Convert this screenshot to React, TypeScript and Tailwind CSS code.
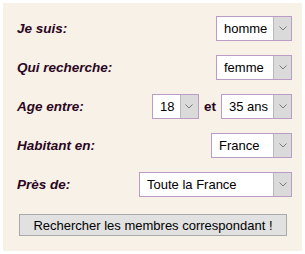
import React from "react";

function Chevron() {
  return (
    <svg width="8" height="5" viewBox="0 0 8 5" className="block">
      <path d="M0.5 0.5 L4 4 L7.5 0.5" fill="none" stroke="#7a7a7a" strokeWidth="1" />
    </svg>
  );
}

function Select({ value, width }: { value: string; width: string }) {
  return (
    <div
      className={`flex h-[25px] items-stretch border border-[#bb9cc7] bg-white ${width}`}
    >
      <span className="flex flex-1 items-center pl-[7px] text-[13px] leading-none text-black">
        {value}
      </span>
      <span className="flex w-[18px] items-center justify-center border-l border-[#b9b9b9] bg-[#dadada]">
        <Chevron />
      </span>
    </div>
  );
}

function Row({ label, children }: { label: string; children: React.ReactNode }) {
  return (
    <div className="flex h-[25px] items-center justify-between">
      <span className="text-[13.5px] font-bold italic leading-none text-[#2a0622]">
        {label}
      </span>
      <div className="flex items-center">{children}</div>
    </div>
  );
}

export default function App() {
  return (
    <div
      className="h-[254px] w-[305px] bg-white p-[3px]"
      style={{ fontFamily: '"Liberation Sans", Arial, sans-serif' }}
    >
      <div className="flex h-[248px] w-[299px] flex-col bg-[#f8f1e7] pl-[14px] pr-[10px] pt-[13px]">
        <div className="flex flex-col gap-[14px]">
          <Row label="Je suis:">
            <Select value="homme" width="w-[76px]" />
          </Row>
          <Row label="Qui recherche:">
            <Select value="femme" width="w-[76px]" />
          </Row>
          <Row label="Age entre:">
            <Select value="18" width="w-[47px]" />
            <span className="mx-[5px] text-[13.5px] font-bold leading-none text-[#2a0622]">
              et
            </span>
            <Select value="35 ans" width="w-[71px]" />
          </Row>
          <Row label="Habitant en:">
            <Select value="France" width="w-[81px]" />
          </Row>
          <Row label="Près de:">
            <Select value="Toute la France" width="w-[153px]" />
          </Row>
        </div>
        <div className="mt-[17px] pl-[2px] pr-[5px]">
          <button className="flex h-[22px] w-[268px] items-center justify-center border border-[#a9a9a9] bg-[#e1e1e1] text-[13px] leading-none text-black">
            Rechercher les membres correspondant !
          </button>
        </div>
      </div>
    </div>
  );
}
